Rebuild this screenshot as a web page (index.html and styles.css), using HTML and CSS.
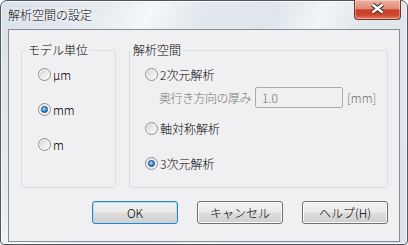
FILE: index.html
```html
<!DOCTYPE html>
<html lang="ja">
<head>
<meta charset="UTF-8">
<meta name="viewport" content="width=device-width, initial-scale=1.0">
<link rel="stylesheet" href="styles.css">
</head>
<body>

<div class="window">
  <div class="titlebar">
    <span class="title">解析空間の設定</span>
    <div class="close">
      <svg width="47" height="19" viewBox="0 0 47 19">
        <path d="M18.5 5.5 L28.5 13.5 M28.5 5.5 L18.5 13.5" stroke="#3b2a28" stroke-width="4.6" fill="none"/>
        <path d="M18.5 5.5 L28.5 13.5 M28.5 5.5 L18.5 13.5" stroke="#ffffff" stroke-width="2.4" fill="none"/>
      </svg>
    </div>
  </div>

  <div class="client">
    <div class="groups">
      <!-- unit of the model -->
      <fieldset class="group units">
        <legend>モデル単位</legend>
        <div class="row"><span class="radio"></span>μm</div>
        <div class="row"><span class="radio on"></span>mm</div>
        <div class="row"><span class="radio"></span>m</div>
      </fieldset>

      <!-- analysis space -->
      <fieldset class="group space">
        <legend>解析空間</legend>
        <div class="row"><span class="radio"></span>2次元解析</div>
        <div class="row depth">
          <span class="depth-label">奥行き方向の厚み</span>
          <span class="textbox">1.0</span>
          <span class="unit">[mm]</span>
        </div>
        <div class="row axis"><span class="radio"></span>軸対称解析</div>
        <div class="row solid"><span class="radio on"></span>3次元解析</div>
      </fieldset>
    </div>

    <div class="buttons">
      <div class="btn default">OK</div>
      <div class="btn">キャンセル</div>
      <div class="btn">ヘルプ(H)</div>
    </div>
  </div>
</div>

</body>
</html>
```

FILE: styles.css
```css
html, body {
  margin: 0;
}
body {
  width: 408px;
  height: 245px;
  overflow: hidden;
  background: #fff;
  font-family: "Noto Sans CJK JP", sans-serif;
  font-size: 12px;
  font-weight: 300;
  color: #000;
}
.window {
  box-sizing: border-box;
  width: 408px;
  height: 245px;
  border: 1px solid #4f565d;
  border-radius: 7px 7px 4px 4px;
  padding: 0 7px 2px 7px;
  display: flex;
  flex-direction: column;
  background: linear-gradient(118deg, #d9e0e7 0%, #e7ecf1 20%, #f5f7f9 29%, #e3e9ee 38%, #dfe5eb 52%, #f2f5f7 61%, #e1e7ec 70%, #dbe2e9 100%);
  box-shadow: inset 0 0 0 1px rgba(255,255,255,0.7);
}
.titlebar {
  height: 28px;
  display: flex;
  justify-content: space-between;
  align-items: flex-start;
}
.title {
  align-self: center;
  line-height: 16px;
  text-shadow: 0 0 5px #fff, 0 0 3px #fff;
}
.close {
  box-sizing: border-box;
  width: 47px;
  height: 20px;
  margin-top: -1px;
  margin-right: -1px;
  border: 1px solid #7a3328;
  border-top: none;
  border-radius: 0 0 4px 4px;
  background: linear-gradient(#ecb2a3 0%, #df8b77 45%, #c8412a 52%, #c8452b 78%, #e5826a 100%);
  box-shadow: inset 0 0 0 1px rgba(255,255,255,0.35);
}
.close svg {
  display: block;
  margin: -1px 0 0 -1px;
}
.client {
  flex: 1;
  border: 1px solid #878d93;
  background: #f0eff2;
  padding: 13px 11px 0 12px;
  display: flex;
  flex-direction: column;
}
.groups {
  display: flex;
  gap: 13px;
}
.group {
  box-sizing: border-box;
  margin: 0;
  padding: 7px 0 0 0;
  height: 145px;
  min-width: 0;
  border: 1px solid #d5dfe5;
  border-radius: 3px;
}
.group legend {
  padding: 0 2px;
  line-height: 14px;
}
.units {
  width: 95px;
}
.units legend {
  margin-left: 4px;
}
.space {
  width: 259px;
}
.space legend {
  margin-left: 1px;
}
.row {
  display: flex;
  align-items: center;
  gap: 2px;
  height: 20px;
}
.units .row {
  padding-left: 16px;
  margin-bottom: 15px;
}
.space .row {
  padding-left: 15px;
}
.radio {
  box-sizing: border-box;
  position: relative;
  width: 13px;
  height: 13px;
  border-radius: 50%;
  border: 1px solid #8e9092;
  background: linear-gradient(135deg, #cfd0d2 0%, #e9eaeb 50%, #fbfbfb 100%);
  box-shadow: inset 0 0 0 1px #f6f6f6;
}
.radio.on::after {
  content: "";
  position: absolute;
  left: 2px;
  top: 2px;
  width: 7px;
  height: 7px;
  box-sizing: border-box;
  border-radius: 50%;
  border: 1px solid #143f73;
  background: radial-gradient(circle at 38% 35%, #b7e6fb 0%, #3da2e2 45%, #0c5aa6 100%);
}
.space .depth {
  padding-left: 29px;
  margin-top: 3px;
  height: 21px;
  gap: 0;
  color: #767676;
}
.depth-label {
  letter-spacing: -0.5px;
  width: 96px;
  white-space: nowrap;
}
.textbox {
  box-sizing: border-box;
  width: 88px;
  height: 21px;
  line-height: 19px;
  padding-left: 6px;
  border: 1px solid #a9acaf;
  border-radius: 2px;
  background: #f0eff2;
  color: #6d6d6d;
}
.unit {
  margin-left: 4px;
}
.space .axis {
  margin-top: 10px;
}
.space .solid {
  margin-top: 15px;
}
.buttons {
  display: flex;
  justify-content: flex-end;
  gap: 19px;
  margin-top: 13px;
}
.btn {
  box-sizing: border-box;
  width: 86px;
  height: 23px;
  line-height: 21px;
  text-align: center;
  border: 1px solid #707070;
  border-radius: 3px;
  background: linear-gradient(#f2f2f2 0%, #ebebeb 48%, #dddddd 52%, #cfcfcf 100%);
  box-shadow: inset 0 0 0 1px #fbfbfb;
}
.btn.default {
  border-color: #3c7fb1;
  box-shadow: inset 0 0 0 1px #a9e0f6;
}
```
